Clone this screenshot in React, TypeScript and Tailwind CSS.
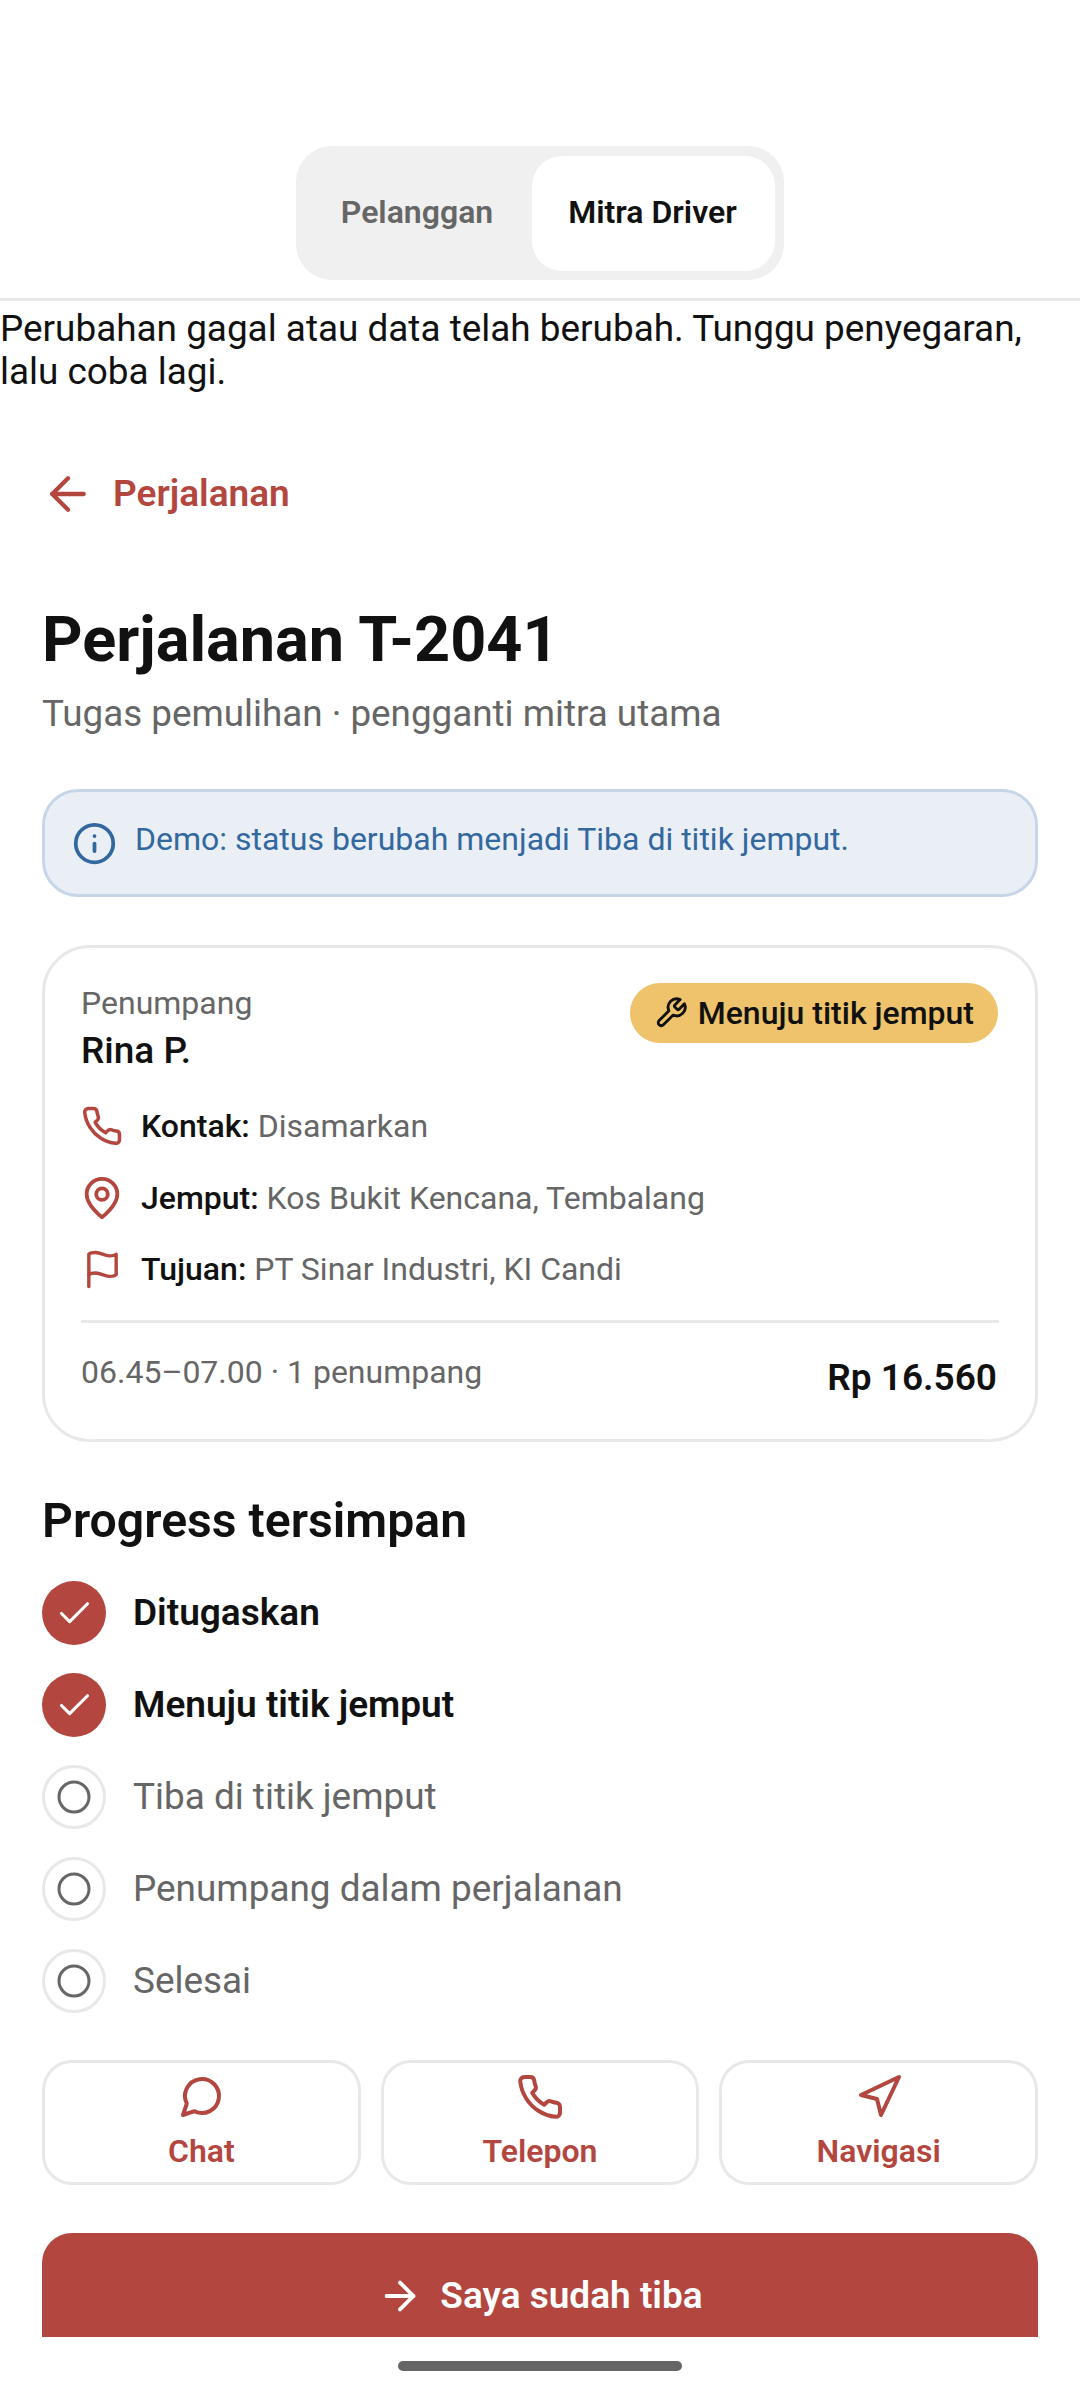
import { ArrowLeft, ArrowRight, Check, Circle, Info, Navigation } from "lucide-react";
import type { ReactNode } from "react";

const Svg = ({ className, children }: { className: string; children: ReactNode }) => (
  <svg viewBox="0 0 24 24" fill="none" stroke="currentColor" strokeWidth={2} strokeLinecap="round" strokeLinejoin="round" className={className}>
    {children}
  </svg>
);

const PhoneIcon = ({ className }: { className: string }) => (
  <Svg className={className}>
    <path d="M22 16.92v3a2 2 0 0 1-2.18 2 19.79 19.79 0 0 1-8.63-3.07 19.5 19.5 0 0 1-6-6 19.79 19.79 0 0 1-3.07-8.67A2 2 0 0 1 4.11 2h3a2 2 0 0 1 2 1.72 12.84 12.84 0 0 0 .7 2.81 2 2 0 0 1-.45 2.11L8.09 9.91a16 16 0 0 0 6 6l1.27-1.27a2 2 0 0 1 2.11-.45 12.84 12.84 0 0 0 2.81.7A2 2 0 0 1 22 16.92z" />
  </Svg>
);

const PinIcon = ({ className }: { className: string }) => (
  <Svg className={className}>
    <path d="M20 10c0 6-8 12-8 12s-8-6-8-12a8 8 0 0 1 16 0Z" />
    <circle cx="12" cy="10" r="3" />
  </Svg>
);

const FlagIcon = ({ className }: { className: string }) => (
  <Svg className={className}>
    <path d="M4 15s1-1 4-1 5 2 8 2 4-1 4-1V3s-1 1-4 1-5-2-8-2-4 1-4 1z" />
    <path d="M4 22v-7" />
  </Svg>
);

const ChatIcon = ({ className }: { className: string }) => (
  <Svg className={className}>
    <path d="m3 21 1.9-5.7a8.5 8.5 0 1 1 3.8 3.8z" />
  </Svg>
);

const WrenchIcon = ({ className }: { className: string }) => (
  <Svg className={className}>
    <path d="M14.7 6.3a1 1 0 0 0 0 1.4l1.6 1.6a1 1 0 0 0 1.4 0l3.77-3.77a6 6 0 0 1-7.94 7.94l-6.91 6.91a2.12 2.12 0 0 1-3-3l6.91-6.91a6 6 0 0 1 7.94-7.94l-3.76 3.76z" />
  </Svg>
);

const steps = [
  { label: "Ditugaskan", done: true },
  { label: "Menuju titik jemput", done: true },
  { label: "Tiba di titik jemput", done: false },
  { label: "Penumpang dalam perjalanan", done: false },
  { label: "Selesai", done: false },
];

const details = [
  { icon: <PhoneIcon className="w-[42px] h-[42px] shrink-0" />, label: "Kontak:", value: "Disamarkan" },
  { icon: <PinIcon className="w-[46px] h-[46px] shrink-0" />, label: "Jemput:", value: "Kos Bukit Kencana, Tembalang" },
  { icon: <FlagIcon className="w-[41px] h-[41px] shrink-0" />, label: "Tujuan:", value: "PT Sinar Industri, KI Candi" },
];

const actions = [
  { icon: <ChatIcon className="w-[48px] h-[48px]" />, label: "Chat" },
  { icon: <PhoneIcon className="w-[48px] h-[48px]" />, label: "Telepon" },
  { icon: <Navigation className="w-[48px] h-[48px]" strokeWidth={2} />, label: "Navigasi" },
];

const App = () => {
  return (
    <div className="w-[1080px] h-[2400px] bg-white font-['Roboto',sans-serif] text-[#111111] overflow-hidden">
      <div className="h-[2337px] overflow-hidden">
        <div className="pt-[146px] h-[301px] border-b-[3px] border-[#e8e8e8]">
          <div className="mx-auto w-[488px] h-[134px] rounded-[36px] bg-[#f0f0f0] flex items-center pl-[8px] pr-[8px]">
            <div className="w-[228px] pb-[3px] pr-[2px] text-center text-[32px] leading-[36px] font-semibold text-[#666666]">Pelanggan</div>
            <div className="w-[243px] h-[115px] pb-[3px] rounded-[30px] bg-white flex items-center justify-center text-[32px] leading-[36px] font-semibold pr-[2px]">Mitra Driver</div>
          </div>
        </div>

        <p className="text-[36.9px] leading-[43px] pt-[6px]">Perubahan gagal atau data telah berubah. Tunggu penyegaran, lalu coba lagi.</p>

        <div className="px-[42px]">
          <div className="flex items-center gap-[18px] mt-[74px] h-[54px] -ml-[1px] text-[#b3473f]">
            <ArrowLeft className="w-[54px] h-[54px]" strokeWidth={1.9} />
            <span className="text-[37px] font-semibold">Perjalanan</span>
          </div>

          <h1 className="mt-[80px] text-[63px] leading-[78px] font-bold">Perjalanan T-2041</h1>
          <p className="mt-[13px] text-[36.8px] leading-[44px] text-[#666666]">Tugas pemulihan · pengganti mitra utama</p>

          <div className="mt-[53px] h-[108px] rounded-[36px] border-[3px] border-[#c6d6e8] bg-[#eaeff6] flex items-center gap-[18px] pl-[27px] text-[#33689f]">
            <Info className="w-[45px] h-[45px] shrink-0" strokeWidth={2} />
            <span className="text-[32px] leading-[44px] -mt-[9px]">Demo: status berubah menjadi Tiba di titik jemput.</span>
          </div>

          <div className="mt-[48px] h-[497px] rounded-[48px] border-[3px] border-[#e8e8e8] px-[36px] pt-[33px]">
            <div className="flex justify-between">
              <div>
                <div className="text-[32px] leading-[44px] text-[#666666]">Penumpang</div>
                <div className="mt-[2px] text-[37px] leading-[48px] font-medium">Rina P.</div>
              </div>
              <div className="mt-[2px] mr-[1px] h-[60px] rounded-full bg-[#efc36b] flex items-center gap-[10px] pl-[24px] pr-[24px] text-[32px] font-medium">
                <WrenchIcon className="w-[34px] h-[34px]" />
                <span>Menuju titik jemput</span>
              </div>
            </div>

            <div className="mt-[27px] flex flex-col gap-[23.5px]">
              {details.map((d) => (
                <div key={d.label} className="flex items-center gap-[18px] h-[48px]">
                  <div className="w-[42px] flex justify-center text-[#b3473f]">{d.icon}</div>
                  <span className="text-[32px]">
                    <span className="font-medium">{d.label}</span> <span className="text-[#666666]">{d.value}</span>
                  </span>
                </div>
              ))}
            </div>

            <div className="mt-[27px] pt-[27px] border-t-[3px] border-[#e8e8e8] flex justify-between pr-[2px]">
              <span className="text-[32px] leading-[44px] text-[#666666]">06.45–07.00 · 1 penumpang</span>
              <span className="text-[37px] leading-[55px] font-semibold">Rp 16.560</span>
            </div>
          </div>

          <h2 className="mt-[51px] text-[48.2px] leading-[56px] font-semibold">Progress tersimpan</h2>

          <div className="mt-[32px] flex flex-col gap-[28px]">
            {steps.map((s) => (
              <div key={s.label} className="flex items-center gap-[27px]">
                {s.done ? (
                  <div className="w-[64px] h-[64px] rounded-full bg-[#b3473f] flex items-center justify-center text-white">
                    <Check className="w-[39px] h-[39px]" strokeWidth={1.9} />
                  </div>
                ) : (
                  <div className="w-[64px] h-[64px] rounded-full border-[3px] border-[#e8e8e8] flex items-center justify-center text-[#666666]">
                    <Circle className="w-[36px] h-[36px]" strokeWidth={2} />
                  </div>
                )}
                <span className={s.done ? "text-[37px] font-semibold" : "text-[36.9px] text-[#666666]"}>{s.label}</span>
              </div>
            ))}
          </div>

          <div className="mt-[47px] grid grid-cols-3 gap-[20px]">
            {actions.map((a) => (
              <div key={a.label} className="h-[125px] rounded-[30px] border-[3px] border-[#e8e8e8] flex flex-col items-center pt-[10px] text-[#b3473f]">
                {a.icon}
                <span className="mt-[10px] text-[32px] leading-[40px] font-semibold">{a.label}</span>
              </div>
            ))}
          </div>

          <div className="mt-[48px] h-[126px] rounded-t-[30px] bg-[#b3473f] flex items-center justify-center gap-[17px] text-white">
            <ArrowRight className="w-[46px] h-[46px]" strokeWidth={2} />
            <span className="text-[37px] font-semibold">Saya sudah tiba</span>
          </div>
        </div>
      </div>
      <div className="pt-[24px]">
        <div className="mx-auto w-[284px] h-[10px] rounded-full bg-[#666666]" />
      </div>
    </div>
  );
};

export default App;
